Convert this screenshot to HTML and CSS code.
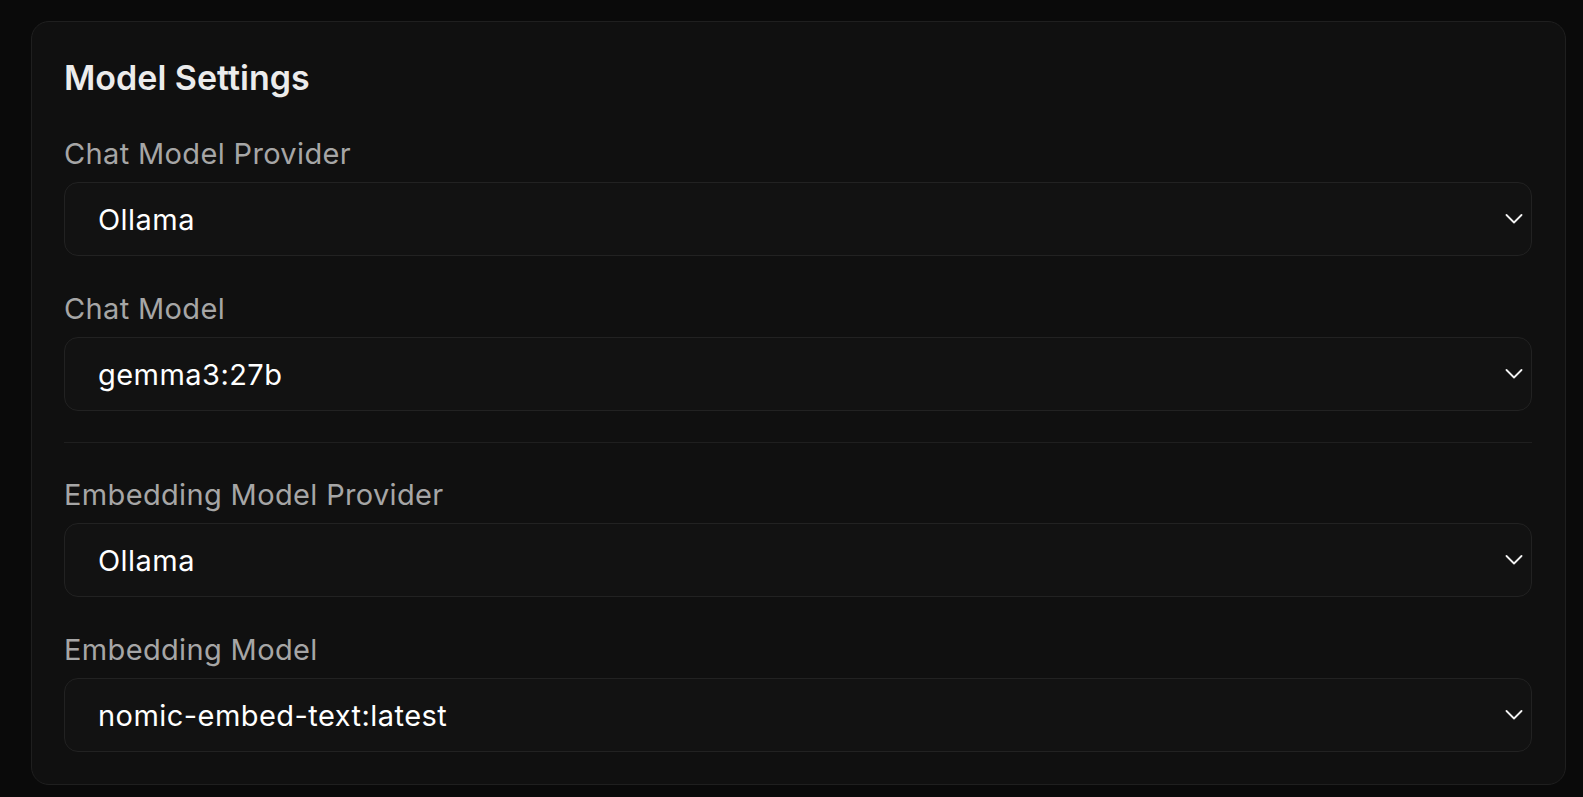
FILE: index.html
```html
<!DOCTYPE html>
<html lang="en">
<head>
<meta charset="utf-8">
<title>Model Settings</title>
<link rel="stylesheet" href="styles.css">
</head>
<body>
<div class="page">
  <section class="card">
    <h2 class="title">Model Settings</h2>
    <div class="field">
      <label class="label">Chat Model Provider</label>
      <div class="select"><span class="value">Ollama</span><svg class="chev" width="18" height="10" viewBox="0 0 18 10"><polyline points="1.5,1 9,8.5 16.5,1" fill="none" stroke="#f2f2f2" stroke-width="1.8" stroke-linecap="round" stroke-linejoin="round"/></svg></div>
    </div>
    <div class="field">
      <label class="label">Chat Model</label>
      <div class="select"><span class="value">gemma3:27b</span><svg class="chev" width="18" height="10" viewBox="0 0 18 10"><polyline points="1.5,1 9,8.5 16.5,1" fill="none" stroke="#f2f2f2" stroke-width="1.8" stroke-linecap="round" stroke-linejoin="round"/></svg></div>
    </div>
    <hr class="divider">
    <div class="field">
      <label class="label">Embedding Model Provider</label>
      <div class="select"><span class="value">Ollama</span><svg class="chev" width="18" height="10" viewBox="0 0 18 10"><polyline points="1.5,1 9,8.5 16.5,1" fill="none" stroke="#f2f2f2" stroke-width="1.8" stroke-linecap="round" stroke-linejoin="round"/></svg></div>
    </div>
    <div class="field">
      <label class="label">Embedding Model</label>
      <div class="select"><span class="value">nomic-embed-text:latest</span><svg class="chev" width="18" height="10" viewBox="0 0 18 10"><polyline points="1.5,1 9,8.5 16.5,1" fill="none" stroke="#f2f2f2" stroke-width="1.8" stroke-linecap="round" stroke-linejoin="round"/></svg></div>
    </div>
  </section>
</div>
</body>
</html>
```
FILE: styles.css
```css
html, body {
  margin: 0;
  background: #0a0a0a;
  height: 100%;
}
body {
  font-family: Inter, "DejaVu Sans", sans-serif;
}
.page {
  padding: 21px 17px 0 31px;
}
.card {
  background: #101010;
  border: 1px solid #1f1f1f;
  border-radius: 18px;
  padding: 32px 33px 32px 32px;
  display: flex;
  flex-direction: column;
  gap: 35px;
}
.title {
  margin: 0;
  font-size: 34px;
  line-height: 47px;
  font-weight: 600;
  color: #ececec;
}
.field {
  display: flex;
  flex-direction: column;
  gap: 10px;
}
.label {
  font-size: 29px;
  line-height: 36px;
  letter-spacing: 0.35px;
  color: #a6a6a6;
  font-weight: 400;
}
.select {
  height: 74px;
  box-sizing: border-box;
  border: 1px solid #222222;
  border-radius: 14px;
  background: #121212;
  padding: 0 8px 0 33px;
  display: flex;
  align-items: center;
  justify-content: space-between;
}
.value {
  font-size: 29px;
  letter-spacing: 0.45px;
  color: #ffffff;
}
.chev {
  display: block;
}
.divider {
  margin: -4px 0 -1px;
  border: 0;
  height: 1px;
  background: #1f1f1f;
}
```
